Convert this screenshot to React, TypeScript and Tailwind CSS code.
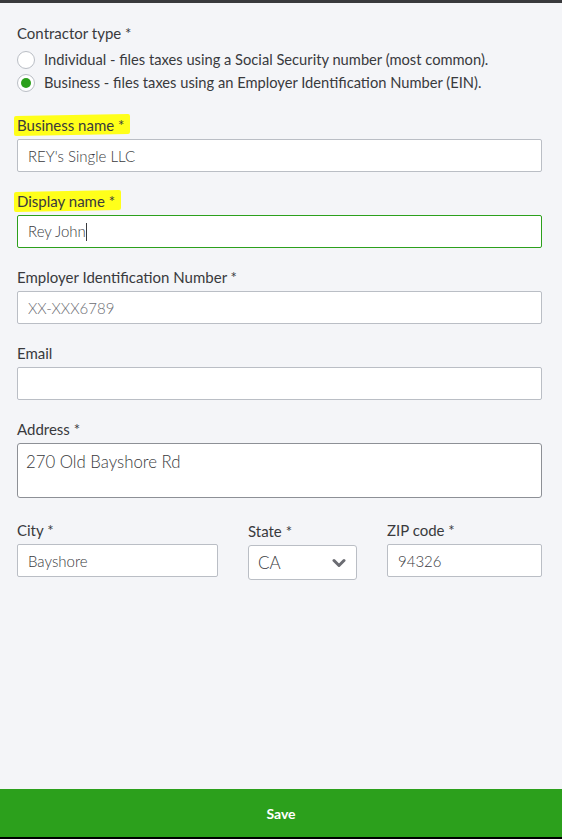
import React, { useState } from 'react';

const labelCls = 'block text-[15px] leading-5 text-[#393a3d] mb-1';
const boxCls = 'w-full h-[33px] bg-white border rounded-[2px] px-[10px] text-[15px] font-light focus:outline-none';
const inputCls = `${boxCls} border-[#babec5] text-[#393a3d]`;

function Marked({ children }: { children: React.ReactNode }) {
  // yellow marker highlight behind a label
  return (
    <span className="inline-block bg-[#ffff1a] -ml-[3px] pl-[3px] pr-[6px] rounded-[2px] -skew-y-1">
      <span className="inline-block skew-y-1">{children}</span>
    </span>
  );
}

function Radio({ checked, label }: { checked: boolean; label: string }) {
  return (
    <label className="flex items-center h-[23px] gap-[9px] text-[14.7px] text-[#393a3d]">
      <span className="w-[18px] h-[18px] rounded-full bg-white border border-[#babec5] flex items-center justify-center shrink-0">
        {checked && <span className="w-[10px] h-[10px] rounded-full bg-[#2ca01c]" />}
      </span>
      {label}
    </label>
  );
}

export default function App() {
  const [type] = useState<'individual' | 'business'>('business');

  return (
    <div className="h-[839px] flex flex-col bg-[#f4f5f8]" style={{ fontFamily: 'Lato, "Open Sans", sans-serif' }}>
      <div className="h-[3px] bg-[#393a3d]" />

      <div className="flex-1 pl-[17px] pr-[20px] pt-[20px]">
        <p className="text-[15px] leading-5 text-[#393a3d] mb-[5px]">Contractor type *</p>
        <Radio checked={type === 'individual'} label="Individual - files taxes using a Social Security number (most common)." />
        <Radio checked={type === 'business'} label="Business - files taxes using an Employer Identification Number (EIN)." />

        <div className="mt-[21px]">
          <label className={labelCls}><Marked>Business name *</Marked></label>
          <input className={inputCls} defaultValue="REY's Single LLC" />
        </div>

        <div className="mt-[19px]">
          <label className={labelCls}><Marked>Display name *</Marked></label>
          {/* focused field, caret after the text */}
          <div className={`${boxCls} border-[#2ca01c] text-[#393a3d] flex items-center`}>
            Rey John<span className="w-px h-[18px] bg-[#393a3d]" />
          </div>
        </div>

        <div className="mt-[19px]">
          <label className={labelCls}>Employer Identification Number *</label>
          <input className={`${boxCls} border-[#babec5] text-[#6b6c72]`} defaultValue="XX-XXX6789" />
        </div>

        <div className="mt-[19px]">
          <label className={labelCls}>Email</label>
          <input className={inputCls} />
        </div>

        <div className="mt-[19px]">
          <label className={labelCls}>Address *</label>
          <textarea
            className="w-full h-[55px] block bg-white border border-[#8d9096] rounded-[3px] px-[8px] pt-[8px] text-[16.8px] leading-5 text-[#393a3d] font-light resize-none focus:outline-none"
            defaultValue="270 Old Bayshore Rd"
          />
        </div>

        <div className="mt-[22px] flex items-start">
          <div className="w-[201px]">
            <label className={labelCls}>City *</label>
            <input className={inputCls} defaultValue="Bayshore" />
          </div>
          <div className="w-[109px] ml-[30px] pt-[1px]">
            <label className={labelCls}>State *</label>
            <div className="h-[35px] bg-white border border-[#babec5] rounded-[3px] flex items-center justify-between pl-[9px] pr-[10px] mt-[1px]">
              <span className="text-[17px] text-[#393a3d] font-light">CA</span>
              <svg width="14" height="10" viewBox="0 0 14 10" fill="none">
                <path d="M2 2.5l5 5 5-5" stroke="#6b6c72" strokeWidth="3" strokeLinecap="round" strokeLinejoin="round" />
              </svg>
            </div>
          </div>
          <div className="flex-1 ml-[30px]">
            <label className={labelCls}>ZIP code *</label>
            <input className={inputCls} defaultValue="94326" />
          </div>
        </div>
      </div>

      <button className="h-[48px] bg-[#2ca01c] text-white text-[14px] font-bold">Save</button>
      <div className="h-[2px] bg-black" />
    </div>
  );
}
